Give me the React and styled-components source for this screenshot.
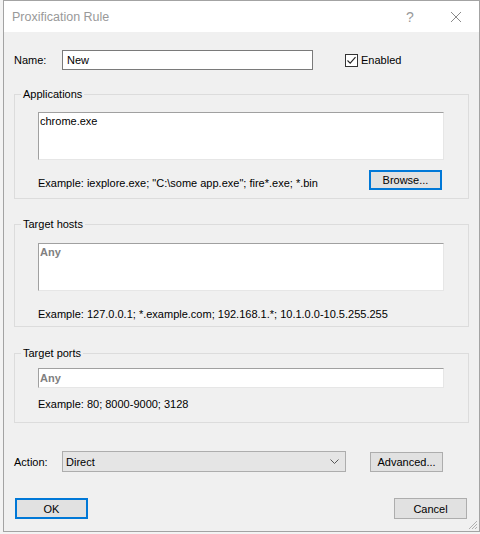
import React from "react";
import styled, { createGlobalStyle } from "styled-components";

const GlobalStyle = createGlobalStyle`
  html, body {
    margin: 0;
    padding: 0;
    background: #f3f3f3;
  }
  body {
    font-family: "Liberation Sans", Arial, sans-serif;
    font-size: 11px;
    color: #000;
  }
`;

const Window = styled.div`
  box-sizing: border-box;
  position: relative;
  margin-left: 3px;
  width: 477px;
  height: 532px;
  border: 1px solid #a3a3a3;
  background: #f0f0f0;
  display: flex;
  flex-direction: column;
`;

const TitleBar = styled.div`
  height: 31px;
  background: #fff;
  display: flex;
  align-items: center;
  padding-left: 8px;
  color: #999;
  font-size: 12.5px;
`;

const Title = styled.div`
  flex: 1;
`;

const TitleButton = styled.div`
  width: 46px;
  height: 31px;
  display: flex;
  align-items: center;
  justify-content: center;
  color: #999;
  font-size: 14px;
`;

const Body = styled.div`
  flex: 1;
  padding: 18px 10px 0 10px;
  display: flex;
  flex-direction: column;
`;

const Row = styled.div`
  display: flex;
  align-items: center;
  height: ${(p) => p.h || 20}px;
  margin-top: ${(p) => p.mt || 0}px;
`;

const FieldLabel = styled.div`
  width: 48px;
`;

const TextBox = styled.input`
  box-sizing: border-box;
  width: ${(p) => p.w}px;
  height: 20px;
  border: 1px solid #7a7a7a;
  background: #fff;
  padding: 0 4px;
  font: inherit;
  color: #000;
  outline: none;
`;

const CheckLabel = styled.label`
  display: flex;
  align-items: center;
  margin-left: 32px;
  gap: 3px;
`;

const CheckBox = styled.span`
  box-sizing: border-box;
  width: 13px;
  height: 13px;
  border: 1px solid #333;
  background: #fff;
  display: flex;
  align-items: center;
  justify-content: center;
`;

const Group = styled.div`
  border: 1px solid #dcdcdc;
  margin-top: ${(p) => p.mt}px;
  padding: 0 24px ${(p) => p.pb}px 23px;
`;

const GroupTitle = styled.div`
  width: fit-content;
  margin: -8px 0 0 -17px;
  padding: 0 2px;
  line-height: 15px;
  background: #f0f0f0;
`;

const ListBox = styled.textarea`
  display: block;
  box-sizing: border-box;
  width: 406px;
  height: ${(p) => p.h}px;
  margin-top: ${(p) => p.mt}px;
  border: 1px solid #e6e6e6;
  border-top-color: #a0a0a0;
  border-left-color: #a0a0a0;
  background: #fff;
  padding: 1px 1px;
  font: inherit;
  line-height: 15px;
  color: ${(p) => (p.placeholderish ? "#808080" : "#000")};
  font-weight: ${(p) => (p.placeholderish ? "bold" : "normal")};
  resize: none;
  outline: none;
  overflow: hidden;
`;

const SunkenInput = styled.input`
  display: block;
  box-sizing: border-box;
  width: 406px;
  height: 20px;
  margin-top: ${(p) => p.mt}px;
  border: 1px solid #e6e6e6;
  border-top-color: #a0a0a0;
  border-left-color: #a0a0a0;
  background: #fff;
  padding: 0 1px;
  font: inherit;
  font-weight: bold;
  color: #808080;
  outline: none;
`;

const HintRow = styled.div`
  display: flex;
  align-items: flex-end;
  margin-top: ${(p) => p.mt}px;
`;

const Hint = styled.div`
  flex: 1;
  line-height: 14px;
`;

const Button = styled.button`
  box-sizing: border-box;
  width: 73px;
  height: ${(p) => p.h || 20}px;
  background: #e1e1e1;
  border: ${(p) => (p.focused ? "2px solid #0078d7" : "1px solid #adadad")};
  font: inherit;
  color: #000;
  padding: 0;
  margin-right: ${(p) => p.mr || 0}px;
  margin-left: ${(p) => p.ml || 0}px;
`;

const Select = styled.div`
  box-sizing: border-box;
  width: 284px;
  height: 21px;
  background: #e5e5e5;
  border: 1px solid #adadad;
  display: flex;
  align-items: center;
  justify-content: space-between;
  padding: 0 6px 0 3px;
`;

const Footer = styled.div`
  display: flex;
  justify-content: space-between;
  margin-top: 26px;
  padding-left: 1px;
`;

const Grip = styled.svg`
  position: absolute;
  right: 1px;
  bottom: 1px;
`;

export default function App() {
  return (
    <>
      <GlobalStyle />
      <Window>
        <TitleBar>
          <Title>Proxification Rule</Title>
          <TitleButton>?</TitleButton>
          <TitleButton>
            <svg width="12" height="12" viewBox="0 0 12 12">
              <path d="M1 1L11 11M11 1L1 11" stroke="#8a8a8a" strokeWidth="1" />
            </svg>
          </TitleButton>
        </TitleBar>
        <Body>
          <Row>
            <FieldLabel>Name:</FieldLabel>
            <TextBox w={251} defaultValue="New" />
            <CheckLabel>
              <CheckBox>
                <svg width="11" height="11" viewBox="0 0 11 11">
                  <path d="M1.5 5.5L4.2 8.2L9.5 2.2" stroke="#222" strokeWidth="1.1" fill="none" />
                </svg>
              </CheckBox>
              Enabled
            </CheckLabel>
          </Row>

          <Group mt={24} pb={8}>
            <GroupTitle>Applications</GroupTitle>
            <ListBox mt={10} h={48} defaultValue="chrome.exe" />
            <HintRow mt={10}>
              <Hint>Example: iexplore.exe; "C:\some app.exe"; fire*.exe; *.bin</Hint>
              <Button focused mr={2}>Browse...</Button>
            </HintRow>
          </Group>

          <Group mt={25} pb={5}>
            <GroupTitle>Target hosts</GroupTitle>
            <ListBox mt={11} h={48} placeholderish defaultValue="Any" />
            <HintRow mt={16}>
              <Hint>Example: 127.0.0.1; *.example.com; 192.168.1.*; 10.1.0.0-10.5.255.255</Hint>
            </HintRow>
          </Group>

          <Group mt={26} pb={11}>
            <GroupTitle>Target ports</GroupTitle>
            <SunkenInput mt={7} defaultValue="Any" />
            <HintRow mt={9}>
              <Hint>Example: 80; 8000-9000; 3128</Hint>
            </HintRow>
          </Group>

          <Row mt={28} h={21}>
            <FieldLabel>Action:</FieldLabel>
            <Select>
              <span>Direct</span>
              <svg width="9" height="5" viewBox="0 0 9 5">
                <path d="M0.5 0.5L4.5 4.5L8.5 0.5" stroke="#555" fill="none" />
              </svg>
            </Select>
            <Button ml={24}>Advanced...</Button>
          </Row>

          <Footer>
            <Button focused h={21}>OK</Button>
            <Button h={21} mr={2}>Cancel</Button>
          </Footer>
        </Body>
        <Grip width="10" height="10" viewBox="0 0 10 10">
          <path d="M9 1L1 9M9 4L4 9M9 7L7 9" stroke="#b0b0b0" strokeWidth="1" />
        </Grip>
      </Window>
    </>
  );
}
